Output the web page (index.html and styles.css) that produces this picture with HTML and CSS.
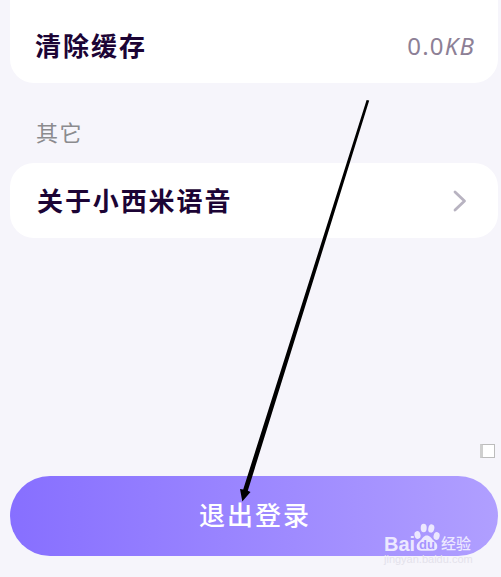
FILE: index.html
```html
<!DOCTYPE html>
<html lang="zh-CN">
<head>
  <meta charset="UTF-8" />
  <meta name="viewport" content="width=device-width, initial-scale=1.0"/>
  <title>设置</title>
  <link rel="stylesheet" href="styles.css">
</head>
<body>
  <main class="settings">
    <section class="card card-cache">
      <span class="label">清除缓存</span>
      <span class="value">0.0<span class="unit">KB</span></span>
    </section>

    <h2 class="section-title">其它</h2>

    <section class="card card-about">
      <span class="label label-about">关于小西米语音</span>
      <svg class="chevron" width="14" height="22" viewBox="0 0 14 22">
        <path d="M2 2 L11.5 11 L2 20" />
      </svg>
    </section>

    <div class="spacer"><span class="checkbox"></span></div>

    <button class="logout">退出登录</button>
  </main>

  <svg class="arrow" width="501" height="577" viewBox="0 0 501 577">
    <path d="M366.6 100 L369.2 100.6 L247.8 490.8 L250.5 492 L242.3 501.5 L240 489 L243.2 489.4 Z" />
  </svg>

  <div class="watermark">
    <div class="brand">
      <span class="bai">Bai</span>
      <svg class="paw" width="26" height="29" viewBox="0 0 26 29">
        <g class="pads">
          <ellipse cx="3.5" cy="12" rx="3" ry="4" transform="rotate(-15 3.5 12)" />
          <ellipse cx="9.7" cy="5" rx="3" ry="4.2" />
          <ellipse cx="17.3" cy="5.5" rx="3" ry="4.2" transform="rotate(12 17.3 5.5)" />
          <ellipse cx="22.6" cy="13" rx="3" ry="4" transform="rotate(15 22.6 13)" />
          <path d="M12.8 12.5 C16 12.5 17 15.2 19.3 17.2 C22 19.4 23.8 21.4 23.2 24.4 C22.6 27.6 20 28 13 27.8 C6 28 3.3 27.5 2.8 24.5 C2.2 21.3 4.4 19.2 6.7 17.2 C8.9 15.2 9.7 12.5 12.8 12.5 Z" />
        </g>
        <text x="13" y="25.5">du</text>
      </svg>
      <span class="jingyan">经验</span>
    </div>
    <div class="site">jingyan.baidu.com</div>
  </div>
</body>
</html>
```
FILE: styles.css
```css
* {
  box-sizing: border-box;
  margin: 0;
  padding: 0;
}

body {
  position: relative;
  width: 501px;
  height: 577px;
  overflow: hidden;
  background-color: #f6f5fb;
  font-family: "Noto Sans CJK SC", sans-serif;
}

.settings {
  display: flex;
  flex-direction: column;
  height: 577px;
  padding: 0 3px 21px 10px;
}

.card {
  display: flex;
  align-items: center;
  justify-content: space-between;
  background-color: #fff;
}

.card-cache {
  height: 83px;
  padding: 7px 23px 0 25px;
  border-radius: 0 0 24px 24px;
}

.card-about {
  height: 75px;
  padding: 0 31px 0 27px;
  border-radius: 24px;
}

.label {
  padding-bottom: 2px;
  color: #1c0435;
  font-size: 26px;
  font-weight: 700;
  letter-spacing: 2px;
  white-space: nowrap;
}

.label-about {
  letter-spacing: 1.9px;
}

.value {
  color: #8d8096;
  font-family: "Noto Sans", sans-serif;
  font-size: 24px;
  letter-spacing: 1.2px;
}

.unit {
  font-style: italic;
}

.section-title {
  height: 80px;
  padding-left: 26px;
  color: #8b8b8e;
  font-size: 22px;
  font-weight: 400;
  line-height: 96px;
  letter-spacing: 1.5px;
}

.chevron path {
  fill: none;
  stroke: #b8b3c1;
  stroke-width: 2.8;
  stroke-linecap: round;
  stroke-linejoin: round;
}

.spacer {
  display: flex;
  flex: 1;
  align-items: flex-end;
  justify-content: flex-end;
  padding: 0 3px 18px 0;
}

.checkbox {
  width: 15px;
  height: 14px;
  background-color: #fff;
  border: 1px solid #bcbcbc;
  border-left: 3px solid #cfcfcf;
}

.logout {
  height: 80px;
  padding: 0 0 5px 2px;
  border: none;
  border-radius: 40px;
  background: linear-gradient(90deg, #876fff, #b09fff);
  color: #fff;
  font-family: inherit;
  font-size: 26px;
  font-weight: 500;
  letter-spacing: 2px;
}

.arrow {
  position: absolute;
  top: 0;
  left: 0;
  pointer-events: none;
}

.watermark {
  position: absolute;
  top: 523px;
  left: 384px;
  width: 92px;
  color: #ece8ff;
}

.brand {
  display: flex;
  align-items: flex-end;
  height: 29px;
}

.bai {
  width: 30px;
  font-family: "Liberation Sans", sans-serif;
  font-size: 20px;
  font-weight: 700;
  line-height: 16px;
}

.paw {
  flex: none;
}

.pads {
  fill: #ece8ff;
}

.paw text {
  fill: #a594ff;
  font-family: "Liberation Sans", sans-serif;
  font-size: 13px;
  font-weight: 700;
  text-anchor: middle;
}

.jingyan {
  margin-left: 1px;
  font-size: 15px;
  font-weight: 500;
  line-height: 18px;
  white-space: nowrap;
}

.site {
  margin-top: 1px;
  color: #e4e2eb;
  font-family: "Liberation Sans", sans-serif;
  font-size: 11px;
  line-height: 13px;
}
```
